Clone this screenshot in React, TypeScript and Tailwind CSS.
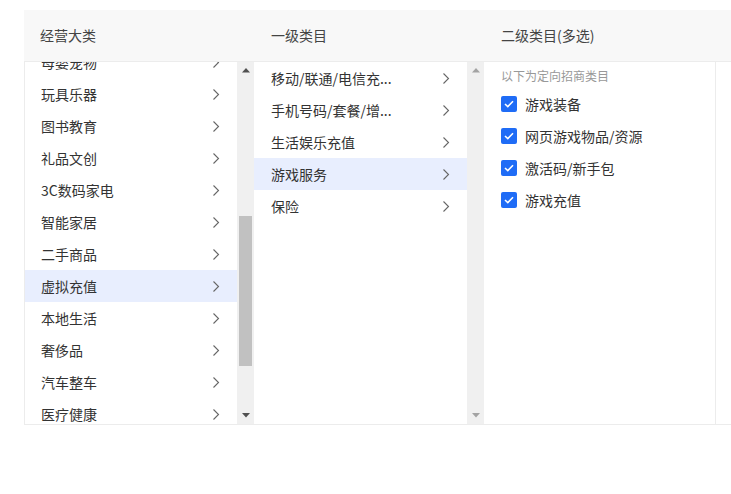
import React from "react";

const mainCategories = [
  "母婴宠物",
  "玩具乐器",
  "图书教育",
  "礼品文创",
  "3C数码家电",
  "智能家居",
  "二手商品",
  "虚拟充值",
  "本地生活",
  "奢侈品",
  "汽车整车",
  "医疗健康",
];

const firstLevel = [
  "移动/联通/电信充...",
  "手机号码/套餐/增...",
  "生活娱乐充值",
  "游戏服务",
  "保险",
];

const secondLevel = ["游戏装备", "网页游戏物品/资源", "激活码/新手包", "游戏充值"];

function Chevron() {
  return (
    <svg width="8" height="13" viewBox="0 0 8 13" fill="none" className="shrink-0">
      <path d="M1.5 1.5L6.5 6.5L1.5 11.5" stroke="#666" strokeWidth="1.1" />
    </svg>
  );
}

function Arrow({ down, color }: { down?: boolean; color: string }) {
  return (
    <svg width="8" height="5" viewBox="0 0 8 5">
      <path d={down ? "M0 0H8L4 4.5Z" : "M0 4.5H8L4 0Z"} fill={color} />
    </svg>
  );
}

function ListRow({ label, active, indent }: { label: string; active?: boolean; indent: string }) {
  return (
    <div
      className={`h-8 shrink-0 flex items-center justify-between pr-[17px] ${indent} ${
        active ? "bg-[#e8eefe]" : ""
      }`}
    >
      <span className="truncate">{label}</span>
      <Chevron />
    </div>
  );
}

function Check() {
  return (
    <span className="w-4 h-4 rounded-[2px] bg-[#1f6cf6] flex items-center justify-center shrink-0">
      <svg width="10" height="8" viewBox="0 0 10 8" fill="none">
        <path d="M1 4L3.8 6.6L9 1.2" stroke="#fff" strokeWidth="1.6" />
      </svg>
    </span>
  );
}

export default function App() {
  return (
    <div
      className="w-[731px] h-[494px] overflow-hidden bg-white pt-[10px] pl-[24px] text-[14px] text-[#333]"
      style={{ fontFamily: '"Noto Sans CJK SC", "Noto Sans", sans-serif' }}
    >
      <div className="w-[900px]">
        {/* Header */}
        <div className="flex h-[52px] bg-[#f8f8f8] border-b border-[#ececec] text-[#444]">
          <div className="w-[230px] pl-4 flex items-center">经营大类</div>
          <div className="w-[230px] pl-[17px] flex items-center">一级类目</div>
          <div className="w-[231px] pl-[17px] flex items-center">二级类目(多选)</div>
        </div>

        {/* Body */}
        <div className="flex h-[363px] border-l border-b border-[#ececec]">
          {/* Main categories */}
          <div className="w-[212px] overflow-hidden">
            <div className="-mt-4 flex flex-col">
              {mainCategories.map((c) => (
                <ListRow key={c} label={c} indent="pl-4" active={c === "虚拟充值"} />
              ))}
            </div>
          </div>
          <div className="w-[17px] bg-[#f0f0f0] flex flex-col items-center">
            <div className="h-[17px] flex items-center justify-center">
              <Arrow color="#505050" />
            </div>
            <div className="flex-1 w-full px-[2px] pt-[137px] pb-[41px]">
              <div className="h-full bg-[#c1c1c1]" />
            </div>
            <div className="h-[17px] flex items-center justify-center">
              <Arrow down color="#505050" />
            </div>
          </div>

          {/* First level */}
          <div className="w-[213px] overflow-hidden">
            {firstLevel.map((c) => (
              <ListRow key={c} label={c} indent="pl-[17px]" active={c === "游戏服务"} />
            ))}
          </div>
          <div className="w-[17px] bg-[#f0f0f0] flex flex-col items-center justify-between">
            <div className="h-[17px] flex items-center justify-center">
              <Arrow color="#a3a3a3" />
            </div>
            <div className="h-[17px] flex items-center justify-center">
              <Arrow down color="#a3a3a3" />
            </div>
          </div>

          {/* Second level */}
          <div className="w-[232px] border-r border-[#ececec] pl-[17px]">
            <div className="pt-[2px] h-[26px] flex items-center text-[12px] text-[#999]">
              以下为定向招商类目
            </div>
            {secondLevel.map((c) => (
              <div key={c} className="h-8 flex items-center gap-2">
                <Check />
                <span>{c}</span>
              </div>
            ))}
          </div>
          <div className="flex-1" />
        </div>
      </div>
    </div>
  );
}
